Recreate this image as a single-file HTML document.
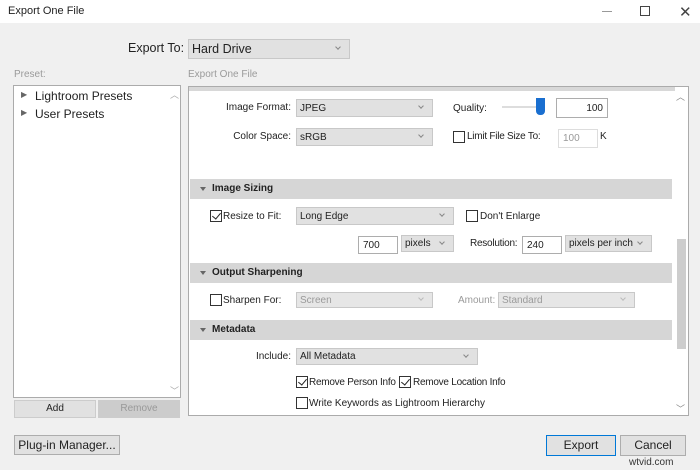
<!DOCTYPE html>
<html><head><meta charset="utf-8"><style>
*{margin:0;padding:0;box-sizing:border-box}
body{width:700px;height:470px;background:#f0f0f0;font-family:"Liberation Sans",sans-serif;font-size:10px;color:#222;position:relative;overflow:hidden}
.a{position:absolute;white-space:nowrap}
.dd{position:absolute;background:#e1e1e1;border:1px solid #c8c8c8;padding:0 3px;font-size:10px;display:flex;align-items:center}
.dd:after{content:"";position:absolute;right:9px;top:50%;margin-top:-4px;width:3px;height:3px;border-right:1px solid #888;border-bottom:1px solid #888;transform:rotate(45deg)}
.dis{color:#9a9a9a;background:#e6e6e6}
.dis:after{border-color:#bbb}
.in{position:absolute;background:#fff;border:1px solid #adadad;padding:0 4px;font-size:10px;display:flex;align-items:center}
.cb{position:absolute;width:12px;height:12px;border:1px solid #333;background:#fff}
.cb.k:after{content:"";position:absolute;left:3px;top:0px;width:4px;height:7px;border-right:1px solid #222;border-bottom:1px solid #222;transform:rotate(40deg)}
.hd{position:absolute;left:190px;width:482px;height:20px;background:#d6d6d6;font-weight:bold;font-size:10px;line-height:20px;padding-left:22px}
.hd:before{content:"";position:absolute;left:10px;top:8px;border-left:3px solid transparent;border-right:3px solid transparent;border-top:4px solid #666}
.btn{position:absolute;background:#e1e1e1;border:1px solid #adadad;text-align:center;font-size:12px}
.lab{text-align:right}
.t{letter-spacing:-0.25px}
</style></head><body>
<div class="a" style="left:0;top:0;width:700px;height:23px;background:#fff"></div>
<div class="a" style="left:8px;top:5px;font-size:11px">Export One File</div>
<div class="a" style="left:602px;top:11px;width:10px;height:1px;background:#999"></div>
<div class="a" style="left:640px;top:6px;width:10px;height:10px;border:1px solid #444"></div>
<div class="a" style="left:679px;top:3px;font-size:15px;color:#444">✕</div>

<div class="a" style="left:128px;top:41px;font-size:12.5px">Export To:</div>
<div class="dd" style="left:188px;top:39px;width:162px;height:20px;font-size:12.5px;background:#e1e1e1">Hard Drive</div>

<div class="a" style="left:14px;top:69px;color:#9a9a9a">Preset:</div>
<div class="a" style="left:188px;top:69px;color:#9a9a9a">Export One File</div>

<div class="a" style="left:13px;top:85px;width:168px;height:313px;background:#fff;border:1px solid #ababab"></div>
<div class="a" style="left:170px;top:88px;font-size:9px;color:#aaa">︿</div>
<div class="a" style="left:170px;top:384px;font-size:9px;color:#aaa">﹀</div>
<div class="a" style="left:21px;top:90px;font-size:8px;color:#666">▶</div>
<div class="a" style="left:35px;top:89px;font-size:12px">Lightroom Presets</div>
<div class="a" style="left:21px;top:108px;font-size:8px;color:#666">▶</div>
<div class="a" style="left:35px;top:107px;font-size:12px">User Presets</div>
<div class="btn" style="left:14px;top:400px;width:82px;height:18px;border-color:#ccc;font-size:10px;line-height:16px;background:#e1e1e1">Add</div>
<div class="btn" style="left:98px;top:400px;width:82px;height:18px;border-color:#ccc;font-size:10px;line-height:16px;background:#cccccc;color:#999">Remove</div>
<div class="btn" style="left:14px;top:435px;width:106px;height:20px;line-height:18px">Plug-in Manager...</div>

<div class="a" style="left:188px;top:86px;width:501px;height:330px;background:#fff;border:1px solid #ababab"></div>
<div class="a" style="left:189px;top:87px;width:486px;height:4px;background:#d8d8d8"></div>
<div class="a" style="left:677px;top:239px;width:9px;height:110px;background:#cdcdcd"></div>
<div class="a" style="left:676px;top:90px;font-size:9px;color:#888">︿</div>
<div class="a" style="left:676px;top:402px;font-size:9px;color:#888">﹀</div>

<div class="a lab" style="left:190px;top:102px;width:101px">Image Format:</div>
<div class="dd" style="left:296px;top:99px;width:137px;height:18px">JPEG</div>
<div class="a" style="left:453px;top:103px">Quality:</div>
<div class="a" style="left:502px;top:106px;width:38px;height:2px;background:#ddd"></div>
<div class="a" style="left:536px;top:98px;width:9px;height:17px;background:#1a6fd0;border-radius:0 0 4px 4px"></div>
<div class="in" style="left:556px;top:98px;width:52px;height:20px;justify-content:flex-end">100</div>

<div class="a lab" style="left:190px;top:131px;width:101px">Color Space:</div>
<div class="dd" style="left:296px;top:128px;width:137px;height:18px">sRGB</div>
<div class="cb" style="left:453px;top:131px"></div>
<div class="a t" style="left:467px;top:131px">Limit File Size To:</div>
<div class="in" style="left:558px;top:129px;width:40px;height:19px;color:#999;border-color:#ddd">100</div>
<div class="a" style="left:600px;top:131px">K</div>

<div class="hd" style="top:179px">Image Sizing</div>
<div class="cb k" style="left:210px;top:210px"></div>
<div class="a" style="left:223px;top:211px">Resize to Fit:</div>
<div class="dd" style="left:296px;top:207px;width:158px;height:18px">Long Edge</div>
<div class="cb" style="left:466px;top:210px"></div>
<div class="a" style="left:480px;top:211px">Don't Enlarge</div>
<div class="in" style="left:358px;top:236px;width:40px;height:18px">700</div>
<div class="dd" style="left:401px;top:235px;width:53px;height:17px">pixels</div>
<div class="a t" style="left:470px;top:238px">Resolution:</div>
<div class="in" style="left:522px;top:236px;width:40px;height:18px">240</div>
<div class="dd" style="left:565px;top:235px;width:87px;height:17px">pixels per inch</div>

<div class="hd" style="top:263px">Output Sharpening</div>
<div class="cb" style="left:210px;top:294px"></div>
<div class="a" style="left:223px;top:295px">Sharpen For:</div>
<div class="dd dis" style="left:296px;top:292px;width:137px;height:16px">Screen</div>
<div class="a" style="left:458px;top:295px;color:#9a9a9a">Amount:</div>
<div class="dd dis" style="left:498px;top:292px;width:137px;height:16px">Standard</div>

<div class="hd" style="top:320px">Metadata</div>
<div class="a lab" style="left:190px;top:351px;width:101px">Include:</div>
<div class="dd" style="left:296px;top:348px;width:182px;height:17px">All Metadata</div>
<div class="cb k" style="left:296px;top:376px"></div>
<div class="a t" style="left:309px;top:377px">Remove Person Info</div>
<div class="cb k" style="left:399px;top:376px"></div>
<div class="a t" style="left:413px;top:377px">Remove Location Info</div>
<div class="cb" style="left:296px;top:397px"></div>
<div class="a" style="left:309px;top:398px">Write Keywords as Lightroom Hierarchy</div>

<div class="btn" style="left:546px;top:435px;width:70px;height:21px;border-color:#0078d7;line-height:19px">Export</div>
<div class="btn" style="left:620px;top:435px;width:66px;height:21px;line-height:19px">Cancel</div>
<div class="a" style="left:629px;top:457px;font-size:10px;color:#333">wtvid.com</div>
</body></html>
